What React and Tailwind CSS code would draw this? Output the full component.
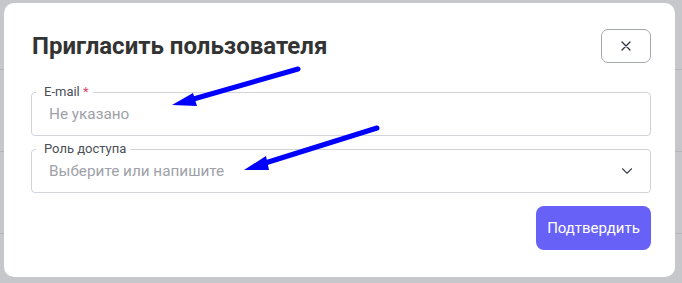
import { ChevronDown } from "lucide-react";

function Field({ label, required, placeholder, select }) {
  return (
    <div className="relative h-[44px] rounded-[4px] border border-[#d0d3d8] flex items-center pl-[17px] pr-[14px]">
      <span className="absolute left-[4px] top-[-10px] bg-white pl-[8px] pr-[4px] text-[13px] leading-[17px] text-[#4a4f57]">
        {label}
        {required && <span className="text-[#e0456b]"> *</span>}
      </span>
      <span className="flex-1 text-[15.3px] text-[#9ea1a8]">{placeholder}</span>
      {select && <ChevronDown className="h-[18px] w-[18px] text-[#3d4452]" strokeWidth={1.5} />}
    </div>
  );
}

export default function App() {
  return (
    <div
      className="relative w-[682px] h-[283px] overflow-hidden bg-[#c6c7ca]"
      style={{ fontFamily: "Roboto, 'Liberation Sans', sans-serif" }}
    >
      {/* page rows behind the overlay */}
      <div className="absolute left-0 right-0 top-[69px] h-px bg-[#b4b6ba]" />
      <div className="absolute left-0 right-0 top-[151px] h-px bg-[#b4b6ba]" />
      <div className="absolute left-0 right-0 top-[233px] h-px bg-[#b4b6ba]" />

      {/* Dialog */}
      <div className="relative ml-[4px] mt-[3px] w-[671px] h-[274px] rounded-[10px] bg-white pl-[27px] pr-[24px] pt-[26px]">
        <div className="flex h-[34px] items-center justify-between">
          <h2 className="pl-[1px] text-[24px] leading-[30px] font-bold text-[#333333]">Пригласить пользователя</h2>
          <button className="flex h-[34px] w-[50px] items-center justify-center rounded-[7px] border border-[#a3a7ae]">
            <svg width="10" height="10" viewBox="0 0 10 10">
              <path d="M1 1L9 9M9 1L1 9" stroke="#2d3340" strokeWidth="1.3" strokeLinecap="round" />
            </svg>
          </button>
        </div>

        <div className="mt-[29px] flex flex-col gap-[13px]">
          <Field label="E-mail" required placeholder="Не указано" />
          <Field label="Роль доступа" placeholder="Выберите или напишите" select />
        </div>

        <div className="mt-[13px] flex justify-end">
          <button className="h-[44px] w-[115px] rounded-[8px] bg-[#6761f8] text-[15px] text-white">
            Подтвердить
          </button>
        </div>
      </div>

      {/* Annotation arrows */}
      <svg className="absolute left-0 top-0 pointer-events-none" width="682" height="283">
        <line x1="298" y1="69" x2="190" y2="100" stroke="#0000ff" strokeWidth="5" strokeLinecap="round" />
        <polygon points="172,105 193,93 197,106" fill="#0000ff" />
        <line x1="377" y1="128" x2="262" y2="164" stroke="#0000ff" strokeWidth="5" strokeLinecap="round" />
        <polygon points="244,170 266,156 269,170" fill="#0000ff" />
      </svg>
    </div>
  );
}
